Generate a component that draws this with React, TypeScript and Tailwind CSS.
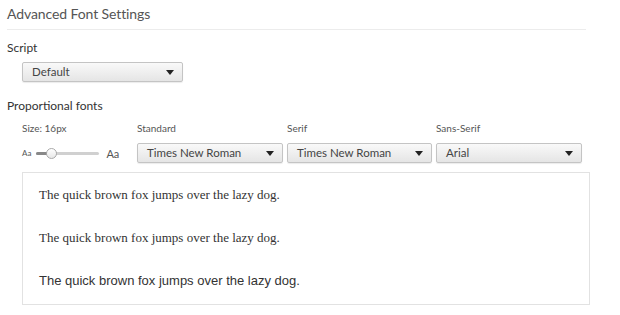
import React from "react";

function Select({ label, width }: { label: string; width: string }) {
  return (
    <div
      className={`${width} h-[20px] flex items-center justify-between pl-[9px] pr-[8px] rounded-[2px] border border-[#c4c4c4] bg-gradient-to-b from-[#f9f9f9] to-[#e5e5e5] shadow-[0_1px_1px_rgba(0,0,0,0.08)] text-[11.5px] text-[#444]`}
    >
      <span className="leading-none">{label}</span>
      <svg width="8" height="5" viewBox="0 0 8 5">
        <path d="M0 0 L8 0 L4 5 Z" fill="#222" />
      </svg>
    </div>
  );
}

export default function App() {
  return (
    <div
      className="w-[620px] h-[315px] bg-white text-[#333] overflow-hidden pl-[7px]"
      style={{ fontFamily: "Lato, 'Open Sans', sans-serif" }}
    >
      <div className="pt-[5px] h-[29px] text-[14px] leading-[18px] tracking-[-0.1px] text-[#555]">
        Advanced Font Settings
      </div>
      <div className="w-[579px] h-px bg-[#ececec]" />
      <div className="mt-[10px] text-[12px] leading-[16px] text-[#333]">Script</div>
      <div className="mt-[6px] ml-[15px]">
        <Select label="Default" width="w-[161px]" />
      </div>
      <div className="mt-[16px] text-[12px] leading-[16px] text-[#333]">Proportional fonts</div>
      <div className="mt-[7px] ml-[15px] flex">
        <div className="w-[115px]">
          <div className="text-[10px] leading-[14px] text-[#555]">Size: 16px</div>
          <div className="mt-[8px] h-[20px] flex items-center">
            <span className="text-[8px] text-[#555] leading-none">Aa</span>
            <div className="relative ml-[5px] w-[63px] h-[3px] rounded-full bg-[#d0d0d0]">
              <div className="absolute left-0 top-0 h-[3px] w-[14px] rounded-full bg-[#888]" />
              <div className="absolute left-[10px] top-[-4px] w-[11px] h-[11px] rounded-full border border-[#a9a9a9] bg-gradient-to-b from-white to-[#e8e8e8]" />
            </div>
            <span className="ml-[7px] text-[11px] text-[#555] leading-none">Aa</span>
          </div>
        </div>
        <div className="w-[150px]">
          <div className="text-[10px] leading-[14px] text-[#555]">Standard</div>
          <div className="mt-[8px]">
            <Select label="Times New Roman" width="w-[146px]" />
          </div>
        </div>
        <div className="w-[149px]">
          <div className="text-[10px] leading-[14px] text-[#555]">Serif</div>
          <div className="mt-[8px]">
            <Select label="Times New Roman" width="w-[145px]" />
          </div>
        </div>
        <div className="w-[146px]">
          <div className="text-[10px] leading-[14px] text-[#555]">Sans-Serif</div>
          <div className="mt-[8px]">
            <Select label="Arial" width="w-[146px]" />
          </div>
        </div>
      </div>
      <div className="mt-[9px] ml-[15px] w-[568px] h-[133px] border border-[#e2e2e2] pl-[16px] pt-[14px] text-[#333]">
        <div
          className="text-[13px] leading-[16px]"
          style={{ fontFamily: "'Liberation Serif', serif" }}
        >
          The quick brown fox jumps over the lazy dog.
        </div>
        <div
          className="mt-[27px] text-[13px] leading-[16px]"
          style={{ fontFamily: "'Liberation Serif', serif" }}
        >
          The quick brown fox jumps over the lazy dog.
        </div>
        <div
          className="mt-[27px] text-[13px] leading-[16px]"
          style={{ fontFamily: "'Liberation Sans', sans-serif" }}
        >
          The quick brown fox jumps over the lazy dog.
        </div>
      </div>
    </div>
  );
}
